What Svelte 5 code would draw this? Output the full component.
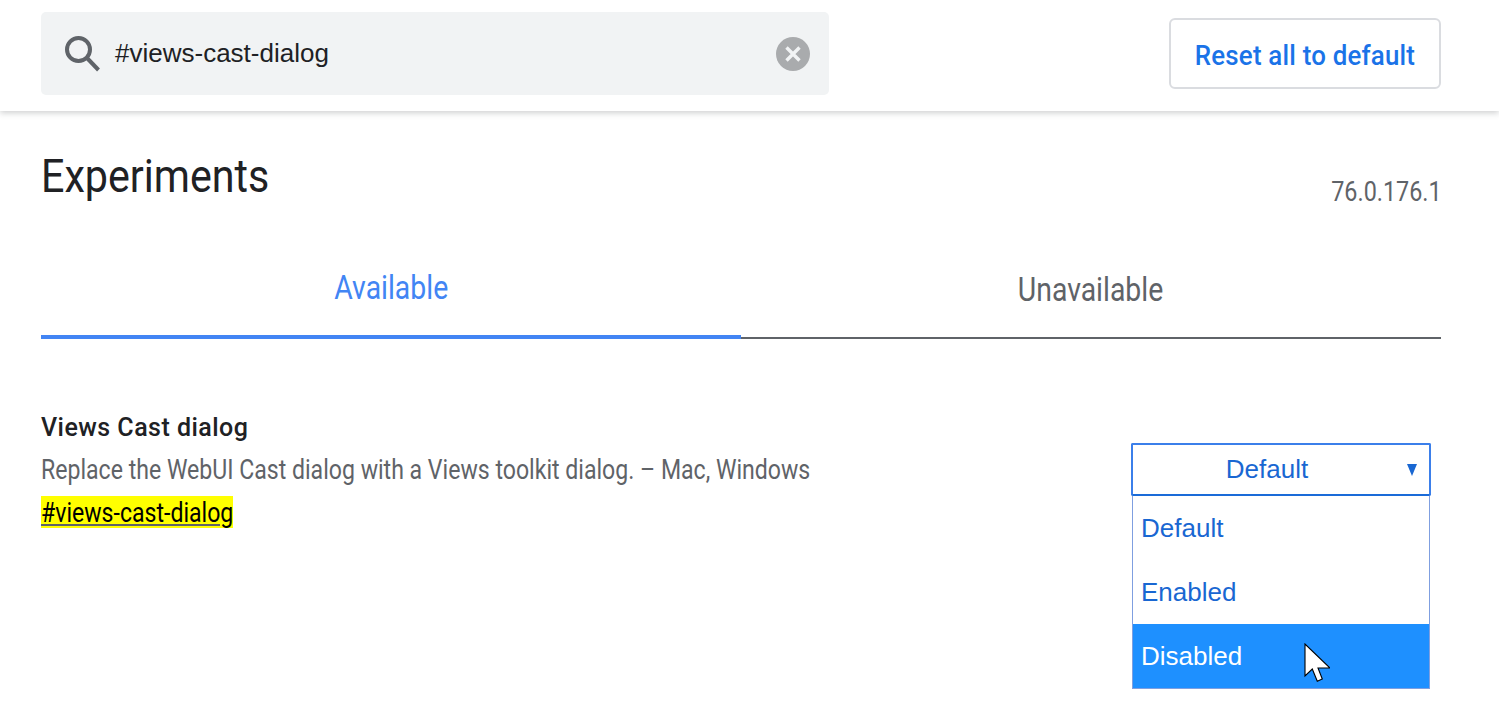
<script lang="ts">
  let query = "#views-cast-dialog";
  const options = ["Default", "Enabled", "Disabled"];
  let hovered = "Disabled";
</script>

<div class="page">
  <header class="bar">
    <div class="search">
      <svg class="glass" viewBox="0 0 36 36" width="36" height="36" aria-hidden="true">
        <circle cx="14.5" cy="13.5" r="11.5" fill="none" stroke="#5f6368" stroke-width="4" />
        <path d="M23 22 L34.5 34" stroke="#5f6368" stroke-width="4" fill="none" />
      </svg>
      <span class="query">{query}</span>
      <svg class="clear" viewBox="0 0 34 34" width="34" height="34" aria-hidden="true">
        <circle cx="17" cy="17" r="17" fill="#a9abad" />
        <path d="M10.5 10.5 L23.5 23.5 M23.5 10.5 L10.5 23.5" stroke="#f1f3f4" stroke-width="3.4" />
      </svg>
    </div>
    <button type="button" class="reset"><span>Reset all to default</span></button>
  </header>

  <main class="content">
    <div class="heading">
      <h1><span>Experiments</span></h1>
      <div class="version"><span>76.0.176.1</span></div>
    </div>

    <div class="tabs">
      <div class="tab active"><span>Available</span></div>
      <div class="tab"><span>Unavailable</span></div>
    </div>

    <section class="flag">
      <div class="info">
        <div class="name">Views Cast dialog</div>
        <div class="desc"><span>Replace the WebUI Cast dialog with a Views toolkit dialog. – Mac, Windows</span></div>
        <a class="link" href="#views-cast-dialog"><span>#views-cast-dialog</span></a>
      </div>
      <div class="select">
        <div class="current">Default<i class="caret"></i></div>
        <ul class="list">
          {#each options as option}
            <li class:hover={option === hovered}>{option}</li>
          {/each}
        </ul>
        <svg class="cursor" viewBox="0 0 26 40" width="26" height="40" aria-hidden="true">
          <path d="M1 1 L1 33 L8.3 26 L13.3 38.3 L18.3 36 L14 25 L26 25 Z" fill="#fff" stroke="#000" stroke-width="1.1" stroke-linejoin="miter" />
        </svg>
      </div>
    </section>
  </main>
</div>

<style>
  :global(body) {
    background: #fff;
    font-family: Roboto, "Liberation Sans", sans-serif;
    color: #202124;
  }

  .page {
    height: 723px;
    overflow: hidden;
  }

  .bar {
    height: 111px;
    box-sizing: border-box;
    padding: 12px 58px 0 41px;
    display: flex;
    justify-content: space-between;
    align-items: flex-start;
    box-shadow: 0 2px 6px rgba(60, 64, 67, 0.25);
  }

  .search {
    width: 788px;
    height: 83px;
    box-sizing: border-box;
    padding: 0 19px 0 23px;
    display: flex;
    align-items: center;
    background: #f1f3f4;
    border-radius: 5px;
  }

  .glass {
    flex: none;
    margin-top: 1px;
  }

  .query {
    flex: 1;
    margin-left: 15px;
    font: 26px "Liberation Sans", sans-serif;
    color: #202124;
  }

  .clear {
    flex: none;
  }

  .reset {
    width: 272px;
    height: 71px;
    margin-top: 6px;
    padding: 4px 0 0;
    background: #fff;
    border: 2px solid #dadce0;
    border-radius: 6px;
    color: #1a73e8;
    font: 500 27px Roboto, sans-serif;
  }

  .reset span {
    display: inline-block;
    letter-spacing: 0.2px;
    transform: scaleX(0.958);
  }

  .content {
    padding: 0 58px 0 41px;
  }

  .heading {
    height: 112px;
    display: flex;
    justify-content: space-between;
  }

  h1 {
    margin: 35px 0 0;
    font-size: 46px;
    line-height: 60px;
    font-weight: 400;
    color: #202124;
  }

  h1 span,
  .version span,
  .tab span,
  .desc span,
  .link span {
    display: inline-block;
    white-space: nowrap;
    transform-origin: left center;
  }

  h1 span {
    transform: scaleX(0.896);
  }

  .version {
    margin-top: 64px;
    font-size: 27px;
    line-height: 34px;
    color: #5f6368;
    text-align: right;
  }

  .version span {
    transform: translateX(1px) scaleX(0.865);
    transform-origin: right center;
  }

  .tabs {
    display: flex;
    height: 116px;
  }

  .tab {
    flex: 1;
    box-sizing: border-box;
    text-align: center;
    padding-top: 47px;
    font-size: 33px;
    line-height: 40px;
    color: #5f6368;
    border-bottom: 2px solid #5f6368;
    height: 116px;
  }

  .tab span {
    transform: scaleX(0.86);
    transform-origin: center center;
  }

  .tab.active {
    color: #4285f4;
    border-bottom: 4px solid #4285f4;
    padding-top: 45px;
  }

  .flag {
    display: flex;
    justify-content: space-between;
    padding: 72px 10px 0 0;
  }

  .name {
    font-size: 25px;
    font-weight: 500;
    letter-spacing: 0.47px;
    line-height: 34px;
    color: #202124;
  }

  .desc {
    margin-top: 8px;
    font-size: 27px;
    line-height: 34px;
    color: #5f6368;
  }

  .desc span {
    transform: scaleX(0.855);
  }

  .link {
    display: block;
    width: 192px;
    height: 32px;
    margin-top: 9px;
    background: #ff0;
    color: #000;
    font-size: 27px;
    line-height: 34px;
    text-decoration: none;
  }

  .link span {
    transform: scaleX(0.855);
    text-decoration: underline;
    text-decoration-color: #5f6368;
  }

  .select {
    position: relative;
    width: 300px;
    margin-top: 32px;
    font: 26px "Liberation Sans", sans-serif;
    color: #1967d2;
  }

  .current {
    position: relative;
    box-sizing: border-box;
    height: 53px;
    line-height: 48px;
    text-align: center;
    padding-right: 28px;
    border: 2px solid #3b7fea;
    border-bottom-color: #1a6bd8;
    border-radius: 2px;
  }

  .caret {
    position: absolute;
    right: 12px;
    top: 19px;
    border-style: solid;
    border-width: 12px 5.5px 0;
    border-color: #1967d2 transparent transparent;
  }

  .list {
    list-style: none;
    margin: 0 1px;
    padding: 0;
    border: 1px solid #7f9fe0;
    border-top: 0;
  }

  .list li {
    height: 64px;
    line-height: 64px;
    padding-left: 8px;
  }

  .list li.hover {
    background: #1e90ff;
    color: #fff;
  }

  .cursor {
    position: absolute;
    left: 173px;
    top: 200px;
  }
</style>
